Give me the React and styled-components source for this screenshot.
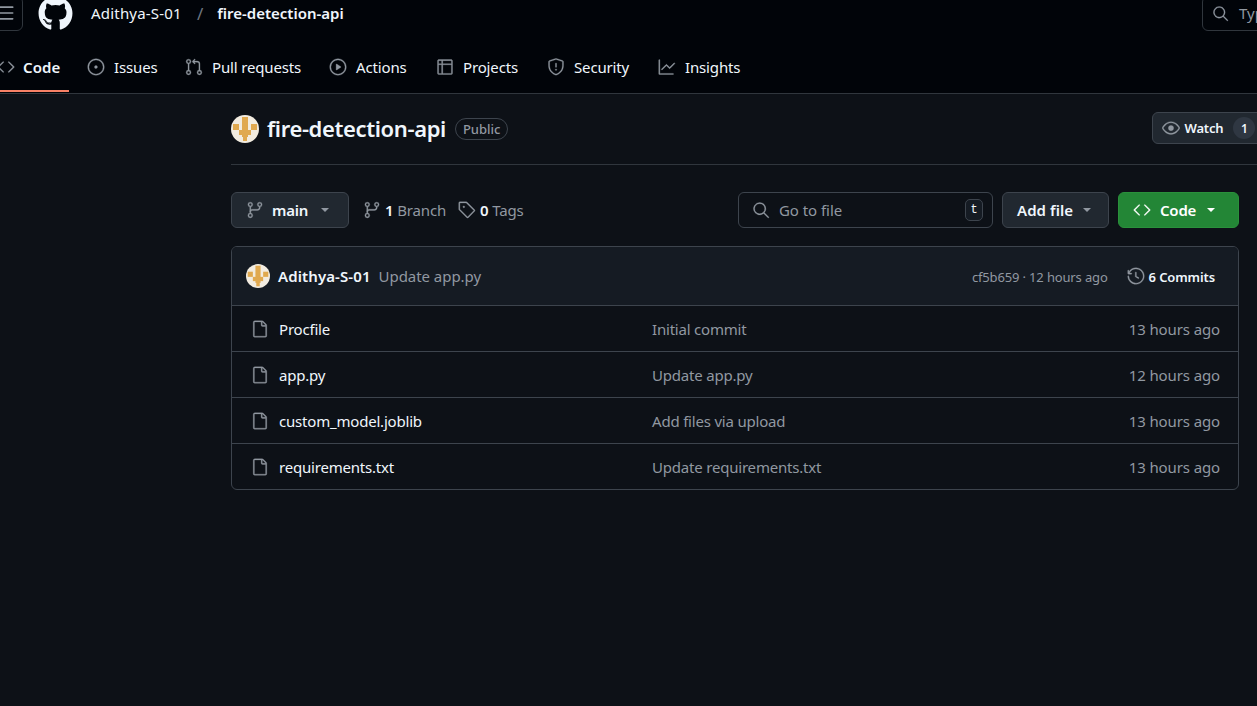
import React from "react";
import styled, { createGlobalStyle } from "styled-components";
import { FaGithub } from "react-icons/fa";
import { Menu } from "lucide-react";
import {
  GoSearch,
  GoCode,
  GoIssueOpened,
  GoGitPullRequest,
  GoPlay,
  GoTable,
  GoShield,
  GoGraph,
  GoEye,
  GoGitBranch,
  GoTag,
  GoFile,
  GoHistory,
} from "react-icons/go";

const GlobalStyle = createGlobalStyle`
  html, body {
    margin: 0;
    height: 100%;
    background: #0d1117;
    overflow: hidden;
  }
  body {
    font-family: "Noto Sans", "Liberation Sans", sans-serif;
    font-size: 15px;
    color: #f0f6fc;
  }
  /* octicons come out thin at this size */
  svg[stroke="currentColor"]:not(.lucide) {
    stroke-width: 0.4;
  }
`;

const Page = styled.div`
  width: 1257px;
  height: 706px;
  overflow: hidden;
`;

const Header = styled.header`
  height: 94px;
  box-sizing: border-box;
  background: #010409;
  border-bottom: 1px solid #30363d;
  overflow: hidden;
`;

const TopBar = styled.div`
  height: 44px;
  margin-top: -9px;
  display: flex;
  align-items: center;
`;

const MenuButton = styled.div`
  width: 35px;
  height: 35px;
  margin-left: -12px;
  margin-right: 15px;
  box-sizing: border-box;
  border: 1px solid #30363d;
  border-radius: 6px;
  display: flex;
  align-items: center;
  justify-content: center;
  color: #9198a1;
  flex: none;
`;

const Logo = styled.div`
  width: 35px;
  height: 35px;
  margin-right: 18px;
  color: #f0f6fc;
  flex: none;
  svg { display: block; }
`;

const Owner = styled.span`
  font-size: 15px;
  letter-spacing: 0.2px;
  color: #f0f6fc;
`;

const Slash = styled.span`
  margin: 0 14px 0 15px;
  color: #6e7681;
  font-size: 17px;
`;

const RepoCrumb = styled.span`
  font-size: 15px;
  font-weight: 600;
  color: #f0f6fc;
`;

const TopSearch = styled.div`
  margin-left: auto;
  width: 80px;
  margin-right: -25px;
  height: 35px;
  box-sizing: border-box;
  padding-left: 9px;
  border: 1px solid #30363d;
  border-radius: 6px;
  display: flex;
  align-items: center;
  gap: 10px;
  color: #9198a1;
  font-size: 15px;
  overflow: hidden;
  flex: none;
`;

const TabBar = styled.nav`
  height: 51px;
  margin-top: 7px;
  margin-left: -3px;
  display: flex;
  align-items: flex-start;
`;

const Tab = styled.div`
  height: 50px;
  box-sizing: border-box;
  width: ${(p) => p.$width}px;
  display: flex;
  align-items: center;
  gap: 9px;
  font-size: 15px;
  letter-spacing: -0.15px;
  color: #f0f6fc;
  svg { color: #9198a1; flex: none; }
`;

const ActiveTab = styled(Tab)`
  position: relative;
  margin-right: 18px;
  gap: 8px;
  font-weight: 600;
  letter-spacing: 0.1px;
  &::after {
    content: "";
    position: absolute;
    left: 0;
    right: 0;
    bottom: 0;
    height: 2px;
    background: #f78166;
  }
`;

const Content = styled.main`
  margin-left: 231px;
  width: 1100px;
`;

const TitleRow = styled.div`
  height: 71px;
  box-sizing: border-box;
  border-bottom: 1px solid #30363d;
  display: flex;
  align-items: center;
`;

const RepoName = styled.h1`
  margin: 0 9px 2px 8px;
  font-size: 22px;
  font-weight: 600;
  letter-spacing: -0.37px;
  color: #f0f6fc;
`;

const Badge = styled.span`
  height: 22px;
  box-sizing: border-box;
  padding: 0 7px;
  border: 1px solid #3d444d;
  border-radius: 11px;
  display: flex;
  align-items: center;
  font-size: 13px;
  font-weight: 500;
  color: #9198a1;
`;

const WatchButton = styled.div`
  margin: 0 0 2px 644px;
  width: 120px;
  height: 32px;
  box-sizing: border-box;
  padding-left: 9px;
  background: #212830;
  border: 1px solid #3d444d;
  border-radius: 6px;
  display: flex;
  align-items: center;
  gap: 4px;
  font-size: 13px;
  font-weight: 600;
  letter-spacing: -0.2px;
  color: #f0f6fc;
  flex: none;
  svg { color: #9198a1; }
`;

const Counter = styled.span`
  width: 22px;
  height: 22px;
  margin-left: 6px;
  border-radius: 50%;
  background: #2f3742;
  display: flex;
  align-items: center;
  justify-content: center;
  font-size: 12px;
`;

const Toolbar = styled.div`
  width: 1008px;
  height: 36px;
  margin-top: 27px;
  display: flex;
  align-items: center;
`;

const Btn = styled.div`
  height: 36px;
  box-sizing: border-box;
  width: ${(p) => p.$width}px;
  margin-left: ${(p) => p.$left || 0}px;
  background: ${(p) => (p.$primary ? "#238636" : "#212830")};
  border: 1px solid ${(p) => (p.$primary ? "#2a903b" : "#3d444d")};
  border-radius: 6px;
  display: flex;
  align-items: center;
  justify-content: space-between;
  padding: 0 ${(p) => p.$right}px 0 14px;
  font-size: 15px;
  font-weight: 600;
  letter-spacing: ${(p) => p.$track || -0.2}px;
  color: ${(p) => (p.$primary ? "#ffffff" : "#f0f6fc")};
  flex: none;
`;

const BtnLabel = styled.span`
  display: flex;
  align-items: center;
  gap: ${(p) => p.$gap || 9}px;
  svg { color: ${(p) => p.$iconColor || "inherit"}; flex: none; }
`;

const Caret = styled.span`
  width: 0;
  height: 0;
  border-left: 4px solid transparent;
  border-right: 4px solid transparent;
  border-top: 4px solid ${(p) => p.$color};
  flex: none;
`;

const Meta = styled.div`
  display: flex;
  align-items: center;
  margin-left: ${(p) => p.$left}px;
  gap: 4px;
  font-size: 15px;
  letter-spacing: -0.15px;
  color: #9198a1;
  svg { flex: none; }
  b { font-weight: 600; color: #f0f6fc; }
`;

const FileSearch = styled.div`
  width: 255px;
  height: 36px;
  margin-left: auto;
  margin-right: 9px;
  box-sizing: border-box;
  padding: 0 9px 0 13px;
  border: 1px solid #3d444d;
  border-radius: 6px;
  display: flex;
  align-items: center;
  gap: 9px;
  font-size: 15px;
  letter-spacing: -0.05px;
  color: #9198a1;
  flex: none;
  svg { flex: none; }
`;

const Key = styled.kbd`
  margin-left: auto;
  width: 18px;
  height: 22px;
  box-sizing: border-box;
  border: 1px solid #3d444d;
  border-radius: 5px;
  display: flex;
  align-items: center;
  justify-content: center;
  font-family: "Liberation Mono", monospace;
  font-size: 12px;
  color: #f0f6fc;
  background: #151b23;
`;

const Table = styled.section`
  width: 1008px;
  height: 244px;
  margin-top: 18px;
  box-sizing: border-box;
  border: 1px solid #3d444d;
  border-radius: 6px;
  overflow: hidden;
`;

const CommitRow = styled.div`
  height: 58px;
  box-sizing: border-box;
  padding: 0 23px 0 14px;
  background: #151b23;
  display: flex;
  align-items: center;
`;

const Avatar = styled.svg`
  display: block;
  flex: none;
`;

const Author = styled.span`
  margin-left: 8px;
  font-size: 15px;
  font-weight: 600;
  letter-spacing: 0.1px;
  color: #f0f6fc;
`;

const CommitMessage = styled.span`
  margin-left: 8px;
  font-size: 15px;
  letter-spacing: -0.05px;
  color: #9198a1;
`;

const CommitHash = styled.span`
  margin-left: auto;
  padding-top: 1px;
  font-size: 13px;
  letter-spacing: -0.15px;
  color: #9198a1;
`;

const CommitsLink = styled.span`
  margin-left: 19px;
  display: flex;
  align-items: center;
  gap: 4px;
  font-size: 13px;
  font-weight: 600;
  letter-spacing: -0.12px;
  color: #f0f6fc;
  svg { color: #9198a1; flex: none; }
  span { padding-top: 1px; }
`;

const Row = styled.div`
  height: 46px;
  box-sizing: border-box;
  border-top: 1px solid #3d444d;
  padding: 0 18px 0 19px;
  display: grid;
  grid-template-columns: 28px 373px 1fr auto;
  align-items: center;
  font-size: 15px;
  letter-spacing: -0.2px;
  svg { color: #9198a1; display: block; }
`;

const FileName = styled.span`
  color: #f0f6fc;
`;

const Muted = styled.span`
  color: #9198a1;
`;

const Age = styled(Muted)`
  letter-spacing: -0.12px;
`;

// cream disc with the gold identicon cross
const RepoAvatar = ({ size }) => (
  <Avatar width={size} height={size} viewBox="0 0 28 28">
    <circle cx="14" cy="14" r="14" fill="#f2ece0" />
    <g fill="#e0a94f">
      <rect x="11" y="2" width="6" height="20" />
      <rect x="2" y="9" width="6" height="6" />
      <rect x="20" y="9" width="6" height="6" />
      <rect x="8" y="15" width="12" height="5" />
      <rect x="12" y="20" width="4" height="6" />
    </g>
  </Avatar>
);

const tabs = [
  { label: "Issues", icon: GoIssueOpened, width: 98 },
  { label: "Pull requests", icon: GoGitPullRequest, width: 144 },
  { label: "Actions", icon: GoPlay, width: 107 },
  { label: "Projects", icon: GoTable, width: 111 },
  { label: "Security", icon: GoShield, width: 111 },
  { label: "Insights", icon: GoGraph, width: 100 },
];

const files = [
  { name: "Procfile", message: "Initial commit", age: "13 hours ago" },
  { name: "app.py", message: "Update app.py", age: "12 hours ago" },
  { name: "custom_model.joblib", message: "Add files via upload", age: "13 hours ago" },
  { name: "requirements.txt", message: "Update requirements.txt", age: "13 hours ago" },
];

export default function App() {
  return (
    <Page>
      <GlobalStyle />
      <Header>
        <TopBar>
          <MenuButton>
            <Menu size={20} />
          </MenuButton>
          <Logo>
            <FaGithub size={35} />
          </Logo>
          <Owner>Adithya-S-01</Owner>
          <Slash>/</Slash>
          <RepoCrumb>fire-detection-api</RepoCrumb>
          <TopSearch>
            <GoSearch size={17} />
            <span>Type</span>
          </TopSearch>
        </TopBar>
        <TabBar>
          <ActiveTab $width={72}>
            <GoCode size={18} />
            Code
          </ActiveTab>
          {tabs.map((t) => (
            <Tab key={t.label} $width={t.width}>
              <t.icon size={18} />
              {t.label}
            </Tab>
          ))}
        </TabBar>
      </Header>
      <Content>
        <TitleRow>
          <RepoAvatar size={28} />
          <RepoName>fire-detection-api</RepoName>
          <Badge>Public</Badge>
          <WatchButton>
            <GoEye size={18} />
            Watch
            <Counter>1</Counter>
          </WatchButton>
        </TitleRow>
        <Toolbar>
          <Btn $width={118} $right={19}>
            <BtnLabel $iconColor="#9198a1" $gap={8}>
              <GoGitBranch size={18} />
              main
            </BtnLabel>
            <Caret $color="#9198a1" />
          </Btn>
          <Meta $left={14}>
            <GoGitBranch size={18} />
            <span>
              <b>1</b> Branch
            </span>
          </Meta>
          <Meta $left={12}>
            <GoTag size={18} />
            <span>
              <b>0</b> Tags
            </span>
          </Meta>
          <FileSearch>
            <GoSearch size={18} />
            Go to file
            <Key>t</Key>
          </FileSearch>
          <Btn $width={107} $right={17} $track={0.07}>
            Add file
            <Caret $color="#9198a1" />
          </Btn>
          <Btn $width={121} $left={9} $right={23} $primary>
            <BtnLabel $gap={9}>
              <GoCode size={18} />
              Code
            </BtnLabel>
            <Caret $color="#ffffff" />
          </Btn>
        </Toolbar>
        <Table>
          <CommitRow>
            <RepoAvatar size={24} />
            <Author>Adithya-S-01</Author>
            <CommitMessage>Update app.py</CommitMessage>
            <CommitHash>cf5b659 · 12 hours ago</CommitHash>
            <CommitsLink>
              <GoHistory size={18} />
              <span>6 Commits</span>
            </CommitsLink>
          </CommitRow>
          {files.map((f) => (
            <Row key={f.name}>
              <GoFile size={18} />
              <FileName>{f.name}</FileName>
              <Muted>{f.message}</Muted>
              <Age>{f.age}</Age>
            </Row>
          ))}
        </Table>
      </Content>
    </Page>
  );
}
